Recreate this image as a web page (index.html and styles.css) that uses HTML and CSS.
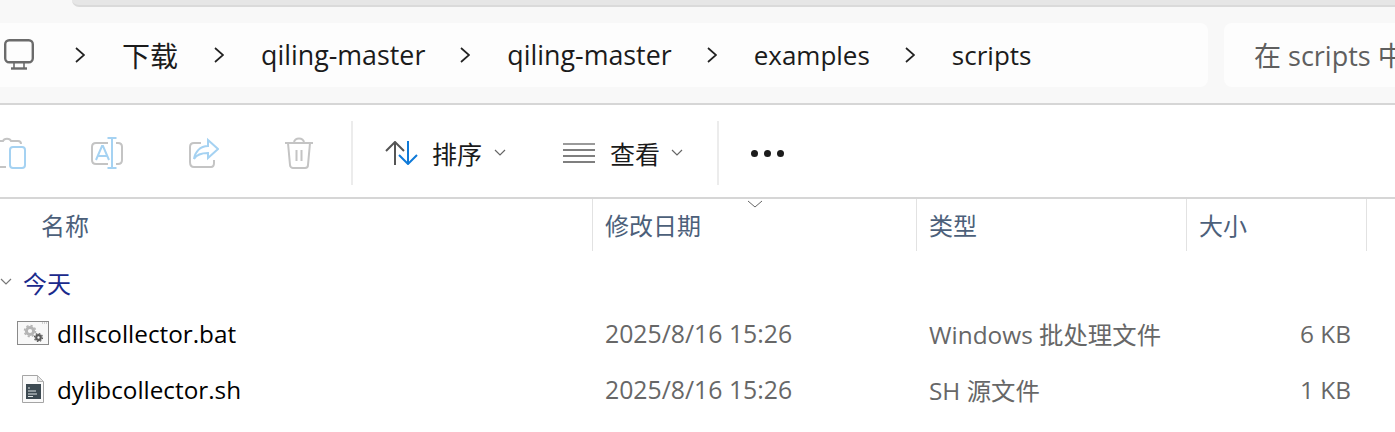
FILE: index.html
```html
<!DOCTYPE html>
<html lang="zh-CN">
<head>
  <meta charset="UTF-8">
  <title>scripts</title>
  <link rel="stylesheet" href="styles.css">
</head>
<body>
  <div class="top">
    <div class="tab-edge"></div>
    <div class="nav">
      <div class="crumbs">
        <svg class="pc-icon" width="32" height="32" viewBox="0 0 32 32" fill="none" stroke="#6b6b6b" stroke-width="2.4">
          <rect x="2.2" y="2.2" width="27.6" height="22" rx="4"/>
          <path d="M11 25v5M21 25v5" stroke-width="1.6"/>
          <path d="M8 30.5h16"/>
        </svg>
        <span class="chev"><svg width="10" height="16" viewBox="0 0 10 16"><path d="M1 1l8 7-8 7" fill="none" stroke="#222" stroke-width="1.7"/></svg></span>
        <span class="crumb cjk">下载</span>
        <span class="chev"><svg width="10" height="16" viewBox="0 0 10 16"><path d="M1 1l8 7-8 7" fill="none" stroke="#222" stroke-width="1.7"/></svg></span>
        <span class="crumb crumb-long">qiling-master</span>
        <span class="chev"><svg width="10" height="16" viewBox="0 0 10 16"><path d="M1 1l8 7-8 7" fill="none" stroke="#222" stroke-width="1.7"/></svg></span>
        <span class="crumb crumb-long">qiling-master</span>
        <span class="chev"><svg width="10" height="16" viewBox="0 0 10 16"><path d="M1 1l8 7-8 7" fill="none" stroke="#222" stroke-width="1.7"/></svg></span>
        <span class="crumb">examples</span>
        <span class="chev"><svg width="10" height="16" viewBox="0 0 10 16"><path d="M1 1l8 7-8 7" fill="none" stroke="#222" stroke-width="1.7"/></svg></span>
        <span class="crumb">scripts</span>
      </div>
      <div class="search">在 scripts 中搜索</div>
    </div>
  </div>

  <div class="toolbar">
    <svg class="tool tool-paste" width="26" height="32" viewBox="0 0 26 32" fill="none" stroke-width="2">
      <path d="M0 4h3c1-3 7-3 8 0h7c2 0 3 1 3 3M0 30h6" stroke="#c4c4c4"/>
      <rect x="10" y="10" width="15" height="21" rx="3" stroke="#a5d2f2"/>
    </svg>
    <svg class="tool tool-rename" width="32" height="32" viewBox="0 0 32 32" fill="none" stroke-width="2">
      <path d="M17 6H5C2 6 1 8 1 10v13c0 2 1 4 4 4h12M25 6h2c3 0 4 2 4 4v13c0 2-1 4-4 4h-2" stroke="#c4c4c4"/>
      <path d="M5 23l6-14h1l6 14M7 19h9M21 1v30M16.500 1h9M16.500 31h9" stroke="#a5d2f2"/>
    </svg>
    <svg class="tool tool-share" width="30" height="32" viewBox="0 0 30 32" fill="none" stroke-width="2">
      <path d="M12 6H5C2 6 1 8 1 10v15c0 3 1 5 4 5h17c2 0 3-2 3-4v-3" stroke="#c4c4c4"/>
      <path d="M19 3l10 9-10 9v-5C13 16 8 17 5 22c1-7 6-13 14-13z" stroke="#a5d2f2"/>
    </svg>
    <svg class="tool tool-trash" width="28" height="32" viewBox="0 0 28 32" fill="none" stroke="#c4c4c4" stroke-width="2">
      <path d="M0 6h28M9 6c0-6 10-6 10 0M3 6l2 22c0 2 2 3 3 3h12c2 0 3-1 3-3l2-22M11.500 13v11M16.500 13v11"/>
    </svg>
    <span class="sep"></span>
    <button class="tool-btn btn-sort">
      <svg width="33" height="24" viewBox="0 0 33 24" fill="none" stroke-width="2">
        <path d="M10 24V2M1 10l9-9 9 9" stroke="#555"/>
        <path d="M23 0v22M14 14l9 9 9-9" stroke="#0f7ad8"/>
      </svg>
      <span>排序</span>
      <svg class="caret" width="12" height="8" viewBox="0 0 12 8"><path d="M1 1l5 5 5-5" fill="none" stroke="#666" stroke-width="1.2"/></svg>
    </button>
    <button class="tool-btn btn-view">
      <svg width="32" height="20" viewBox="0 0 32 20" fill="none" stroke-width="1.7">
        <path d="M0 1h32" stroke="#888"/>
        <path d="M0 7h32M0 13h32M0 19h32" stroke="#555"/>
      </svg>
      <span>查看</span>
      <svg class="caret" width="12" height="8" viewBox="0 0 12 8"><path d="M1 1l5 5 5-5" fill="none" stroke="#666" stroke-width="1.2"/></svg>
    </button>
    <span class="sep sep-2"></span>
    <div class="more"><i></i><i></i><i></i></div>
  </div>

  <div class="table">
    <div class="head">
      <div class="h-cell h-name">名称</div>
      <div class="h-cell">修改日期
        <svg class="sort-mark" width="16" height="8" viewBox="0 0 16 8"><path d="M1 1l7 6 7-6" fill="none" stroke="#666" stroke-width="1"/></svg>
      </div>
      <div class="h-cell">类型</div>
      <div class="h-cell">大小</div>
    </div>

    <div class="group">
      <svg width="12" height="8" viewBox="0 0 12 8"><path d="M1 1l5 5 5-5" fill="none" stroke="#777" stroke-width="1.2"/></svg>
      <span>今天</span>
    </div>

    <div class="row">
      <div class="f-name">
        <span class="f-icon">
          <svg width="32" height="24" viewBox="0 0 32 24">
            <rect x=".5" y=".5" width="31" height="23" fill="#f8f8f8" stroke="#8a8a8a"/>
            <path d="M25 2h5" stroke="#aaa" stroke-dasharray="1 1"/>
            <circle cx="13" cy="10" r="3.600" fill="none" stroke="#b4b4b4" stroke-width="3"/>
            <circle cx="13" cy="10" r="5.500" fill="none" stroke="#b4b4b4" stroke-width="1.600" stroke-dasharray="2.200 2.100"/>
            <circle cx="21.500" cy="16.500" r="2.300" fill="none" stroke="#5c5c5c" stroke-width="2.200"/>
            <circle cx="21.500" cy="16.500" r="4" fill="none" stroke="#5c5c5c" stroke-width="1.200" stroke-dasharray="1.600 1.500"/>
          </svg>
        </span>
        dllscollector.bat
      </div>
      <div class="f-meta f-date">2025/8/16 15:26</div>
      <div class="f-meta">Windows 批处理文件</div>
      <div class="f-meta f-size">6 KB</div>
    </div>

    <div class="row">
      <div class="f-name">
        <span class="f-icon">
          <svg width="22" height="28" viewBox="0 0 22 28">
            <path d="M.5.5h15l6 6v21H.5z" fill="#fafafa" stroke="#a5a5a5"/>
            <path d="M15.500.5v6h6z" fill="#e6e6e6" stroke="#b5b5b5"/>
            <rect x="4" y="9" width="15" height="15" fill="#3d4a52"/>
            <path d="M6 13h2M6 16h8M6 19h9M6 21.500h5" stroke="#dfe4e6" stroke-width="1"/>
          </svg>
        </span>
        dylibcollector.sh
      </div>
      <div class="f-meta f-date">2025/8/16 15:26</div>
      <div class="f-meta">SH 源文件</div>
      <div class="f-meta f-size">1 KB</div>
    </div>
  </div>
</body>
</html>
```

FILE: styles.css
```css
* {
  box-sizing: border-box;
}
html, body {
  margin: 0;
  height: 100%;
  overflow: hidden;
}
body {
  font-family: "Open Sans", "Noto Sans CJK SC", sans-serif;
  font-size: 24px;
  background: #fff;
  color: #000;
}

.top {
  height: 105px;
  background: #f8f8f8;
  border-bottom: 2px solid #d6d6d6;
}
.tab-edge {
  height: 7px;
  margin-left: 72px;
  background: #e6e6e6;
  border-bottom: 2px solid #dadada;
  border-bottom-left-radius: 7px;
}
.nav {
  display: flex;
  gap: 16px;
  height: 64px;
  margin-top: 16px;
}
.crumbs {
  display: flex;
  align-items: center;
  width: 1208px;
  padding-left: 3px;
  background: #fdfdfd;
  border-radius: 0 8px 8px 0;
  color: #1b1b1b;
  font-size: 26px;
  white-space: nowrap;
}
.pc-icon {
  flex: none;
  margin-top: -2px;
  margin-right: 5px;
}
.chev {
  display: flex;
  margin: 0 37px 0 35px;
}
.crumb {
  margin-top: -1px;
}
.crumb-long {
  font-size: 26.8px;
}
.cjk {
  margin-right: 1px;
  font-size: 28px;
}
.search {
  flex: 1;
  display: flex;
  align-items: center;
  padding: 0 0 1px 30px;
  background: #fdfdfd;
  border-radius: 8px 0 0 8px;
  color: #5f5f5f;
  font-size: 27px;
  white-space: nowrap;
  overflow: hidden;
}

.toolbar {
  display: flex;
  align-items: center;
  height: 94px;
  border-bottom: 2px solid #d6d6d6;
  padding-top: 4px;
}
.tool {
  flex: none;
}
.tool-rename {
  margin-left: 65px;
}
.tool-share {
  margin-left: 66px;
}
.tool-trash {
  margin-left: 66px;
}
.sep {
  width: 2px;
  height: 64px;
  margin-left: 38px;
  background: #ececec;
}
.tool-btn {
  display: flex;
  align-items: center;
  padding: 0;
  border: none;
  background: none;
  color: #1b1b1b;
  font-family: inherit;
  font-size: 25px;
}
.tool-btn span {
  margin-left: 14px;
}
.caret {
  margin-left: 12px;
}
.btn-sort {
  margin-left: 32px;
}
.btn-view {
  margin-left: 57px;
}
.btn-view span {
  margin-left: 15px;
}
.btn-view .caret {
  margin-left: 11px;
}
.sep-2 {
  margin-left: 34px;
}
.more {
  display: flex;
  gap: 6px;
  margin-left: 32px;
}
.more i {
  width: 7px;
  height: 7px;
  border-radius: 50%;
  background: #1b1b1b;
}

.head, .row {
  display: grid;
  grid-template-columns: 593px 324px 270px 180px;
}
.head {
  height: 52px;
  color: #4c607a;
}
.h-cell {
  position: relative;
  display: flex;
  align-items: center;
  padding: 0 0 2px 12px;
  border-right: 1px solid #e2e2e2;
}
.h-name {
  padding-left: 41px;
}
.sort-mark {
  position: absolute;
  top: 1px;
  left: 154px;
}
.group {
  display: flex;
  align-items: center;
  gap: 11px;
  height: 36px;
  margin-top: 13px;
  color: #1a2a8c;
}
.row {
  height: 56px;
  align-items: center;
}
.group + .row {
  margin-top: 5px;
}
.f-name {
  display: flex;
  align-items: center;
  padding-left: 17px;
  color: #000;
  font-size: 24.3px;
}
.f-icon {
  display: flex;
  justify-content: center;
  width: 32px;
  margin-right: 8px;
}
.f-meta {
  padding-left: 12px;
  color: #676767;
  font-size: 24.4px;
}
.f-date {
  font-size: 24.8px;
}
.f-size {
  padding-right: 16px;
  text-align: right;
}
```
